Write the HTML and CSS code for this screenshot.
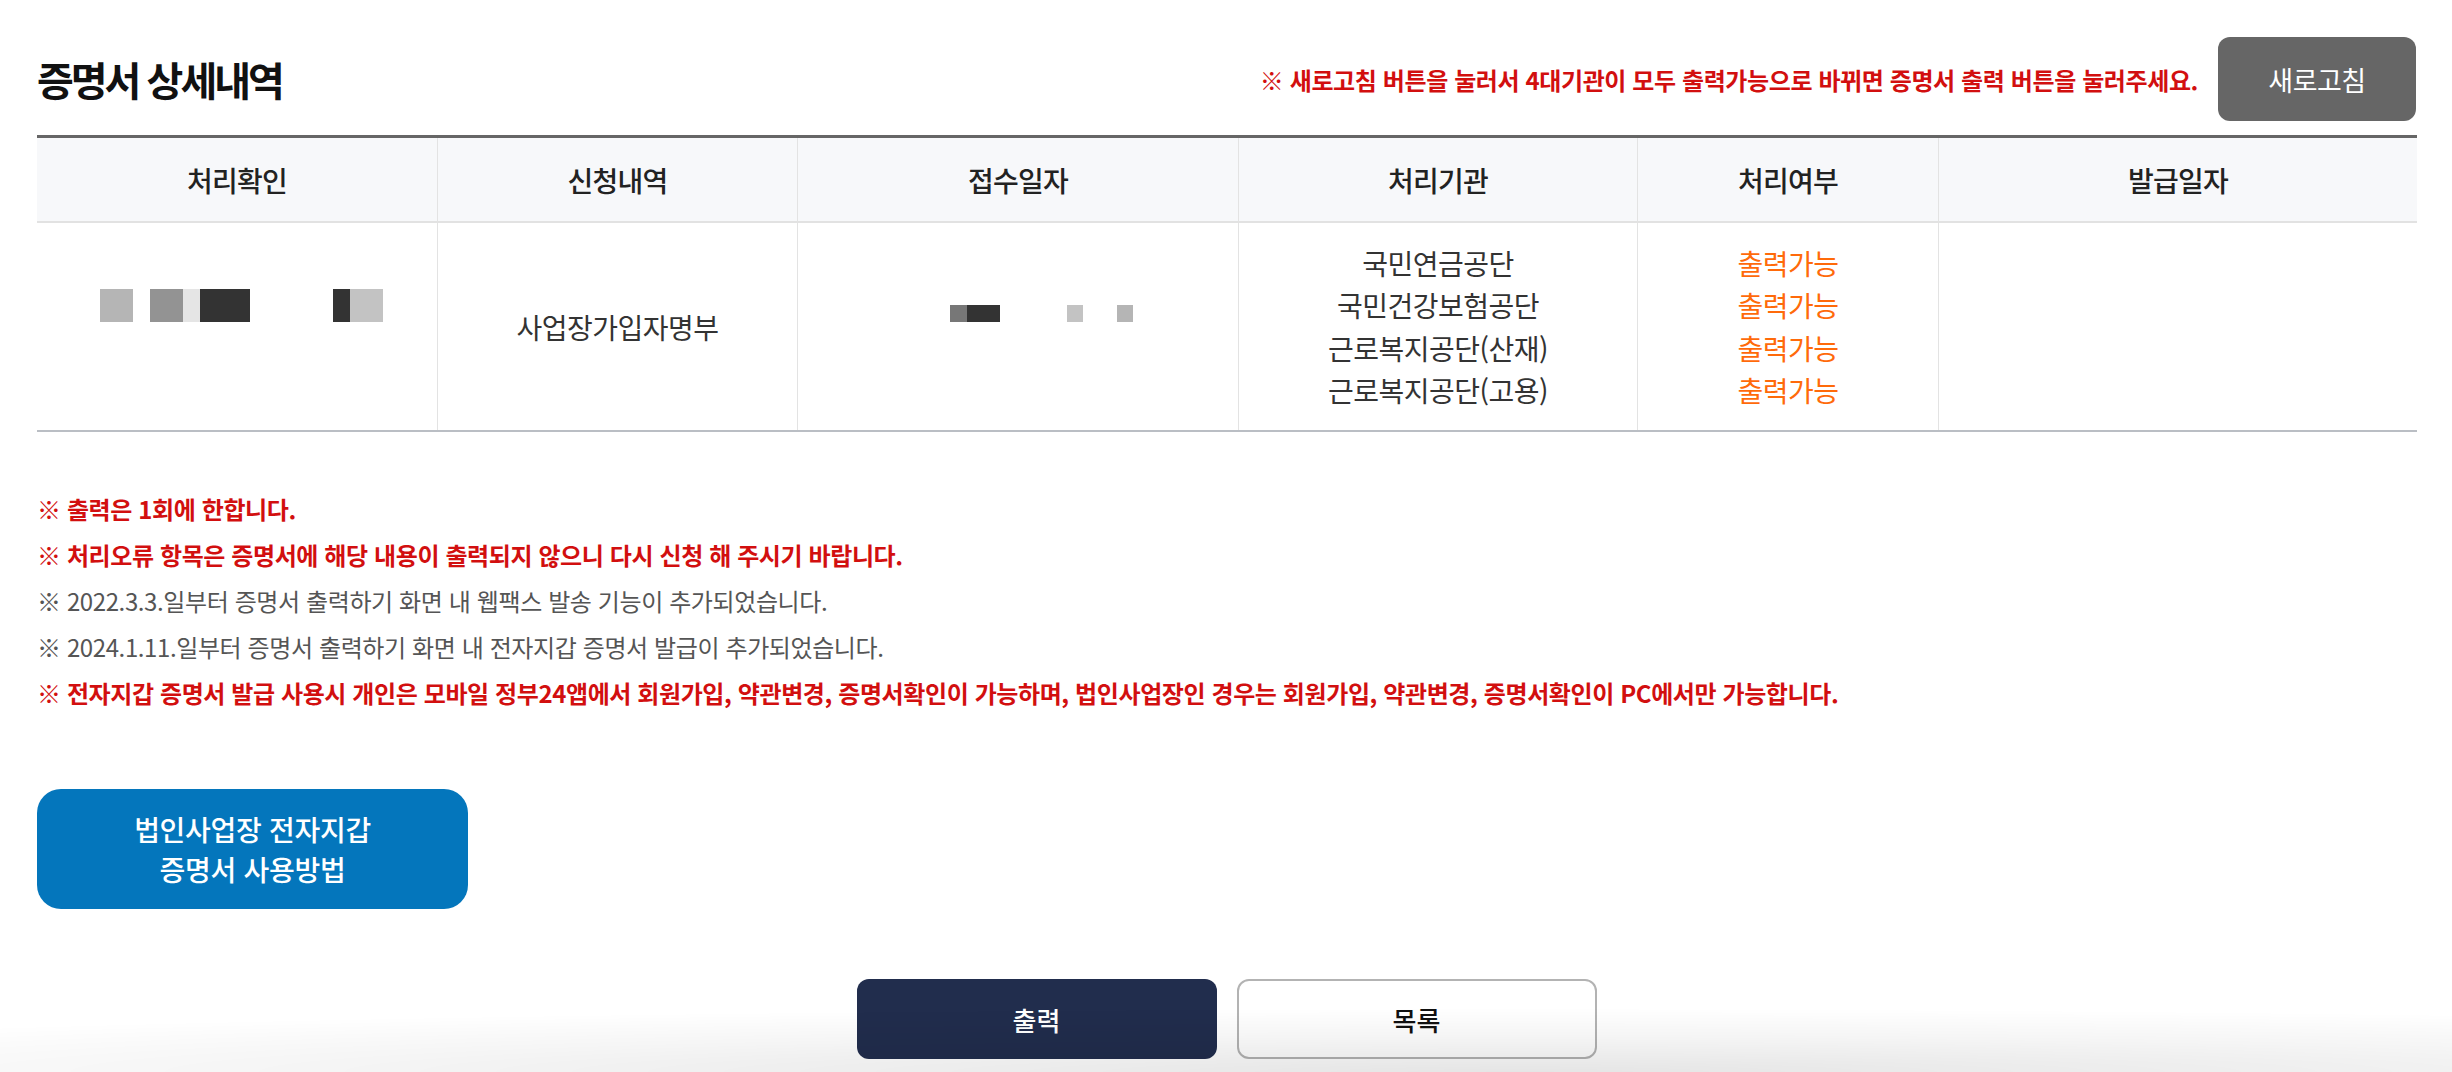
FILE: index.html
```html
<!DOCTYPE html>
<html lang="ko">
<head>
<meta charset="utf-8">
<title>증명서 상세내역</title>
<link rel="stylesheet" href="styles.css">
</head>
<body>
<div class="wrap">
  <div class="head">
    <h2 class="title">증명서 상세내역</h2>
    <div class="head-right">
      <p class="notice">※ 새로고침 버튼을 눌러서 4대기관이 모두 출력가능으로 바뀌면 증명서 출력 버튼을 눌러주세요.</p>
      <button class="btn-refresh" type="button">새로고침</button>
    </div>
  </div>

  <table class="tbl">
    <colgroup>
      <col class="c1"><col class="c2"><col class="c3"><col class="c4"><col class="c5"><col class="c6">
    </colgroup>
    <thead>
      <tr>
        <th>처리확인</th>
        <th>신청내역</th>
        <th>접수일자</th>
        <th>처리기관</th>
        <th>처리여부</th>
        <th>발급일자</th>
      </tr>
    </thead>
    <tbody>
      <tr>
        <td>
          <svg class="mask mask1" width="291" height="75" viewBox="0 0 291 75" aria-hidden="true">
            <rect x="8" y="0" width="33" height="33" fill="#b5b5b5"/>
            <rect x="58" y="0" width="33" height="33" fill="#939393"/>
            <rect x="91" y="0" width="17" height="33" fill="#e5e5e5"/>
            <rect x="108" y="0" width="50" height="33" fill="#333333"/>
            <rect x="241" y="0" width="17" height="33" fill="#333333"/>
            <rect x="258" y="0" width="33" height="33" fill="#c3c3c3"/>
          </svg>
        </td>
        <td>사업장가입자명부</td>
        <td>
          <svg class="mask mask3" width="230" height="43" viewBox="0 0 230 43" aria-hidden="true">
            <rect x="47" y="0" width="17" height="17" fill="#777777"/>
            <rect x="64" y="0" width="33" height="17" fill="#333333"/>
            <rect x="164" y="0" width="16" height="17" fill="#c3c3c3"/>
            <rect x="214" y="0" width="16" height="17" fill="#b5b5b5"/>
          </svg>
        </td>
        <td>
          <div class="lines">
            <span>국민연금공단</span>
            <span>국민건강보험공단</span>
            <span>근로복지공단(산재)</span>
            <span>근로복지공단(고용)</span>
          </div>
        </td>
        <td>
          <div class="lines ok">
            <span>출력가능</span>
            <span>출력가능</span>
            <span>출력가능</span>
            <span>출력가능</span>
          </div>
        </td>
        <td></td>
      </tr>
    </tbody>
  </table>

  <ul class="notes">
    <li class="red">※ 출력은 1회에 한합니다.</li>
    <li class="red">※ 처리오류 항목은 증명서에 해당 내용이 출력되지 않으니 다시 신청 해 주시기 바랍니다.</li>
    <li class="gray">※ 2022.3.3.일부터 증명서 출력하기 화면 내 웹팩스 발송 기능이 추가되었습니다.</li>
    <li class="gray">※ 2024.1.11.일부터 증명서 출력하기 화면 내 전자지갑 증명서 발급이 추가되었습니다.</li>
    <li class="red">※ 전자지갑 증명서 발급 사용시 개인은 모바일 정부24앱에서 회원가입, 약관변경, 증명서확인이 가능하며, 법인사업장인 경우는 회원가입, 약관변경, 증명서확인이 PC에서만 가능합니다.</li>
  </ul>

  <a class="btn-guide" href="#">법인사업장 전자지갑<br>증명서 사용방법</a>

  <div class="actions">
    <button class="btn btn-print" type="button">출력</button>
    <button class="btn btn-list" type="button">목록</button>
  </div>
</div>
<div class="shade"></div>
</body>
</html>
```

FILE: styles.css
```css
* { box-sizing: border-box; }

html, body {
  margin: 0;
  padding: 0;
  background: #fff;
  font-family: "Noto Sans CJK KR", "Noto Sans", sans-serif;
  color: #222;
}

body { overflow: hidden; height: 1072px; }

.wrap {
  padding: 37px 36px 0 37px;
}

.head {
  display: flex;
  align-items: center;
  justify-content: space-between;
  height: 84px;
}

.title {
  margin: 0;
  font-size: 40px;
  font-weight: 700;
  letter-spacing: -3px;
  color: #111;
  line-height: 1;
}

.head-right {
  display: flex;
  align-items: center;
  gap: 20px;
}

.notice {
  margin: 0;
  color: #d20f0f;
  font-size: 24px;
  font-weight: 700;
  letter-spacing: -0.4px;
}

.btn-refresh {
  width: 198px;
  height: 84px;
  border: 0;
  border-radius: 12px;
  background: #666;
  color: #fff;
  font-family: inherit;
  font-size: 27px;
  font-weight: 400;
  letter-spacing: -0.5px;
  padding: 0;
}

.tbl {
  margin-top: 14px;
  width: 100%;
  border-collapse: separate;
  border-spacing: 0;
  table-layout: fixed;
  border-top: 3px solid #666;
  border-bottom: 2px solid #babec4;
}

.c1 { width: 400px; }
.c2 { width: 360px; }
.c3 { width: 441px; }
.c4 { width: 399px; }
.c5 { width: 301px; }
.c6 { width: 479px; }

.tbl th {
  height: 85px;
  padding: 0;
  background: #f7f8fa;
  border-bottom: 2px solid #e2e2e2;
  font-size: 28px;
  font-weight: 500;
  color: #222;
  letter-spacing: -0.7px;
}

.tbl td {
  height: 207px;
  padding: 0;
  text-align: center;
  vertical-align: middle;
  font-size: 28px;
  color: #333;
  letter-spacing: -0.5px;
}

.tbl th + th,
.tbl td + td {
  border-left: 1px solid #e3e3e3;
}

.mask {
  display: block;
  margin: 0 auto;
}

.lines {
  display: flex;
  flex-direction: column;
  align-items: center;
  line-height: 42.5px;
}

.ok { color: #ff6a0a; }

.notes {
  list-style: none;
  margin: 54px 0 0;
  padding: 0;
  font-size: 24px;
  line-height: 46px;
  letter-spacing: -0.4px;
}

.notes .red { color: #d20f0f; font-weight: 700; }
.notes .gray { color: #555; font-weight: 400; }

.btn-guide {
  display: flex;
  align-items: center;
  justify-content: center;
  text-align: center;
  width: 431px;
  height: 120px;
  margin-top: 73px;
  border-radius: 24px;
  background: #0476bc;
  color: #fff;
  text-decoration: none;
  font-size: 28px;
  font-weight: 500;
  line-height: 40px;
  letter-spacing: -0.3px;
}

.actions {
  display: flex;
  justify-content: center;
  gap: 20px;
  margin-top: 70px;
}

.btn {
  width: 360px;
  height: 80px;
  border-radius: 12px;
  font-family: inherit;
  font-size: 26px;
  font-weight: 500;
  padding: 0;
}

.btn-print {
  border: 0;
  background: #212d4d;
  color: #fff;
}

.btn-list {
  border: 2px solid #b3b3b3;
  background: #fff;
  color: #111;
}

.shade {
  position: fixed;
  left: 0;
  right: 0;
  bottom: 0;
  height: 80px;
  pointer-events: none;
  background: radial-gradient(110% 100% at 62% 100%, rgba(0, 0, 0, 0.10) 0%, rgba(0, 0, 0, 0.04) 45%, rgba(0, 0, 0, 0) 80%);
}
```
